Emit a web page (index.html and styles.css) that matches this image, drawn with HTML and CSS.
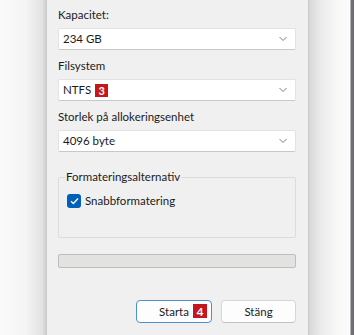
FILE: index.html
```html
<!DOCTYPE html>
<html lang="sv">
<head>
  <meta charset="UTF-8">
  <meta name="viewport" content="width=device-width, initial-scale=1.0">
  <title>Formatera</title>
  <link rel="stylesheet" href="styles.css">
</head>
<body>
  <div class="screen">
    <div class="shade-left"></div>

    <div class="dialog">
      <div class="field">
        <label class="field-label">Kapacitet:</label>
        <div class="combo">
          <span class="combo-value">234 GB</span>
          <svg class="chevron" width="10" height="6" viewBox="0 0 10 6"><path d="M1.5 1 L5 4.5 L8.5 1" fill="none" stroke="#808080" stroke-width="1"/></svg>
        </div>
      </div>

      <div class="field">
        <label class="field-label">Filsystem</label>
        <div class="combo">
          <span class="combo-value">NTFS <span class="badge">3</span></span>
          <svg class="chevron" width="10" height="6" viewBox="0 0 10 6"><path d="M1.5 1 L5 4.5 L8.5 1" fill="none" stroke="#808080" stroke-width="1"/></svg>
        </div>
      </div>

      <div class="field">
        <label class="field-label">Storlek på allokeringsenhet</label>
        <div class="combo">
          <span class="combo-value">4096 byte</span>
          <svg class="chevron" width="10" height="6" viewBox="0 0 10 6"><path d="M1.5 1 L5 4.5 L8.5 1" fill="none" stroke="#808080" stroke-width="1"/></svg>
        </div>
      </div>

      <fieldset class="group">
        <legend class="group-title">Formateringsalternativ</legend>
        <div class="check-row">
          <span class="checkbox">
            <svg width="9" height="8" viewBox="0 0 9 8"><path d="M1 4.2 L3.4 6.5 L8 1.5" fill="none" stroke="#fff" stroke-width="1.3"/></svg>
          </span>
          <span class="check-label">Snabbformatering</span>
        </div>
      </fieldset>

      <div class="progress"></div>

      <div class="buttons">
        <button class="btn btn-default">Starta<span class="badge badge-over">4</span></button>
        <button class="btn">Stäng</button>
      </div>
    </div>

    <div class="shade-right"></div>
  </div>
</body>
</html>
```

FILE: styles.css
```css
body {
  margin: 0;
  font-family: Lato, "Noto Sans", sans-serif;
  font-size: 11.5px;
  color: #1b1b1b;
  background: #fafafa;
}
.screen {
  display: flex;
  height: 335px;
  overflow: hidden;
}
.shade-left {
  width: 47px;
  background: linear-gradient(90deg, #fbfbfb 0%, #f4f4f4 55%, #e2e2e2 90%, #c9c9c9 100%);
}
.dialog {
  width: 238px;
  padding: 7px 12px 0 11px;
  background: #f0f0f0;
  display: flex;
  flex-direction: column;
}
.shade-right {
  width: 46px;
  background: linear-gradient(90deg, #c8c8c8 0px, #dadada 2px, #ececec 14px, #f8f8f8 30px, #fbfbfb 42px, #6e6e78 43px, #6e6e78 46px);
}
.field {
  display: flex;
  flex-direction: column;
  margin-bottom: 8px;
}
.field-label {
  line-height: 16px;
  margin-bottom: 5px;
}
.combo {
  height: 22px;
  box-sizing: border-box;
  background: #ffffff;
  border: 1px solid #e3e3e3;
  border-bottom-color: #c8c8c8;
  border-radius: 2px;
  display: flex;
  align-items: center;
  justify-content: space-between;
  padding: 0 5px 0 4px;
}
.combo-value {
  display: flex;
  align-items: center;
  gap: 4px;
  line-height: 16px;
}
.chevron {
  margin-right: 2px;
}
.badge {
  display: inline-flex;
  align-items: center;
  justify-content: center;
  width: 13px;
  height: 13px;
  background: #c4161c;
  color: #ffffff;
  font-weight: bold;
  font-size: 11px;
  line-height: 13px;
}
.group {
  margin: 10px 0 0 0;
  padding: 9px 8px 0 8px;
  height: 68px;
  box-sizing: border-box;
  border: 1px solid #dcdcdc;
  border-radius: 2px;
  min-width: 0;
}
.group-title {
  padding: 0 1px;
  margin-left: -2px;
  line-height: 14px;
}
.check-row {
  display: flex;
  align-items: center;
  gap: 4px;
}
.checkbox {
  width: 14px;
  height: 14px;
  box-sizing: border-box;
  border-radius: 3px;
  background: #005fb8;
  display: flex;
  align-items: center;
  justify-content: center;
}
.check-label {
  line-height: 16px;
}
.progress {
  margin-top: 16px;
  height: 14px;
  box-sizing: border-box;
  background: #e2e3e0;
  border: 1px solid #bdbdbd;
  border-radius: 2px;
}
.buttons {
  margin-top: 32px;
  display: flex;
  justify-content: flex-end;
  gap: 9px;
}
.btn {
  position: relative;
  width: 76px;
  height: 23px;
  box-sizing: border-box;
  font-family: inherit;
  font-size: 11.5px;
  color: #1b1b1b;
  background: #fdfdfd;
  border: 1px solid #d6d6d6;
  border-bottom-color: #c2c2c2;
  border-radius: 4px;
  padding: 0;
}
.btn + .btn {
  width: 75px;
}
.btn-default {
  border: 1px solid #4f8fd0;
}
.badge-over {
  position: absolute;
  left: 56px;
  top: 3px;
  width: 14px;
  height: 14px;
  font-size: 12px;
}
```
